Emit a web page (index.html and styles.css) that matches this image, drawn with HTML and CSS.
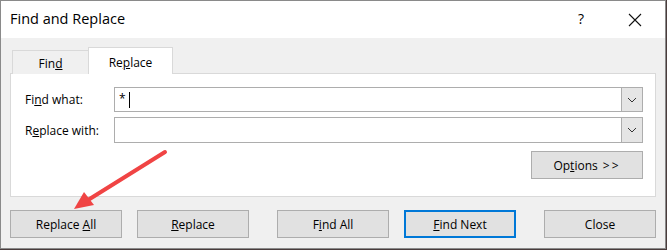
FILE: index.html
```html
<!DOCTYPE html>
<html>
<head>
<meta charset="utf-8">
<link rel="stylesheet" href="styles.css">
</head>
<body>
<div class="window">
  <div class="titlebar">
    <span class="title">Find and Replace</span>
    <span class="help">?</span>
    <svg class="close-x" width="14" height="14" viewBox="0 0 14 14"><path d="M1 1L13 13M13 1L1 13" stroke="#111" stroke-width="1.1" fill="none"/></svg>
  </div>
  <div class="content">
    <div class="tabs">
      <div class="tab">Fin<u>d</u></div>
      <div class="tab active">Re<u>p</u>lace</div>
    </div>
    <div class="panel">
      <div class="row">
        <label class="lbl">Fi<u>n</u>d what:</label>
        <div class="combo">
          <div class="field"><span class="val">*</span><span class="caret"></span></div>
          <div class="drop"><svg width="10" height="6" viewBox="0 0 10 6"><path d="M1 1L5 5L9 1" stroke="#333" stroke-width="1" fill="none"/></svg></div>
        </div>
      </div>
      <div class="row">
        <label class="lbl">R<u>e</u>place with:</label>
        <div class="combo">
          <div class="field"></div>
          <div class="drop"><svg width="10" height="6" viewBox="0 0 10 6"><path d="M1 1L5 5L9 1" stroke="#333" stroke-width="1" fill="none"/></svg></div>
        </div>
      </div>
      <div class="opt-row">
        <button class="btn">Op<u>t</u>ions <span class="gt">&gt;&gt;</span></button>
      </div>
    </div>
    <div class="actions">
      <button class="btn">Replace <u>A</u>ll</button>
      <button class="btn gap-s"><u>R</u>eplace</button>
      <button class="btn gap-l">F<u>i</u>nd All</button>
      <button class="btn gap-s focused"><u>F</u>ind Next</button>
      <button class="btn gap-l">Close</button>
    </div>
  </div>
  <svg class="arrow" width="667" height="250" viewBox="0 0 667 250">
    <line x1="165" y1="152" x2="88" y2="200" stroke="#f04444" stroke-width="4" stroke-linecap="round"/>
    <polygon points="74,209 84,192 94,205" fill="#f04444"/>
  </svg>
</div>
</body>
</html>
```
FILE: styles.css
```css
html, body {
  margin: 0;
  padding: 0;
  background: #4a3c3c;
}
.window {
  position: relative;
  width: 666px;
  height: 249px;
  box-sizing: border-box;
  border: 1px solid #8a8a8a;
  background: #f0f0f0;
  font-family: "Open Sans", "Noto Sans", sans-serif;
  font-size: 12px;
  color: #000;
  overflow: hidden;
}
.titlebar {
  height: 37px;
  background: #fff;
  display: flex;
  align-items: center;
}
.title {
  font-size: 14.5px;
  margin-left: 9px;
  flex: 1;
  margin-top: -2px;
}
.help {
  font-size: 14px;
  margin-right: 44px;
  margin-top: -2px;
}
.close-x {
  margin-right: 23px;
}
.content {
  padding: 9px 9px 0 9px;
}
.tabs {
  display: flex;
  align-items: flex-end;
  height: 27px;
  padding-left: 2px;
  position: relative;
  z-index: 1;
  margin-bottom: -1px;
}
.tab {
  width: 77px;
  height: 24px;
  box-sizing: border-box;
  border: 1px solid #d9d9d9;
  border-bottom: none;
  background: #f0f0f0;
  display: flex;
  align-items: center;
  justify-content: center;
  padding-top: 2px;
}
.tab.active {
  width: 85px;
  height: 27px;
  background: #fff;
  margin-left: -1px;
  padding-top: 2px;
}
.panel {
  height: 124px;
  box-sizing: border-box;
  border: 1px solid #d9d9d9;
  background: #fff;
  padding: 13px 12px 0 14px;
}
.row {
  display: flex;
  align-items: center;
  height: 25px;
  margin-bottom: 5px;
}
.row + .row {
  height: 26px;
}
.lbl {
  width: 89px;
}
.combo {
  flex: 1;
  display: flex;
  height: 100%;
  box-sizing: border-box;
  border: 1px solid #adadad;
}
.field {
  flex: 1;
  display: flex;
  align-items: center;
  padding-left: 4px;
}
.val {
  font-size: 12px;
  margin-top: -3px;
}
.caret {
  display: inline-block;
  width: 1px;
  height: 16px;
  background: #000;
  margin-left: 3px;
}
.drop {
  width: 20px;
  background: #e5e5e5;
  border-left: 1px solid #adadad;
  display: flex;
  align-items: center;
  justify-content: center;
}
.opt-row {
  display: flex;
  justify-content: flex-end;
  margin-top: 8px;
}
.gt {
  letter-spacing: 2px;
  margin-left: 2px;
}
.btn {
  width: 112px;
  height: 28px;
  box-sizing: border-box;
  border: 1px solid #adadad;
  background: #e1e1e1;
  font-family: inherit;
  font-size: 12px;
  color: #000;
  padding: 0;
  margin: 0;
}
.actions {
  display: flex;
  margin-top: 13px;
}
.gap-s { margin-left: 15px; }
.gap-l { margin-left: 28px; }
.btn.focused {
  border: 2px solid #0078d7;
}
.arrow {
  position: absolute;
  left: -1px;
  top: -1px;
  pointer-events: none;
}
```
